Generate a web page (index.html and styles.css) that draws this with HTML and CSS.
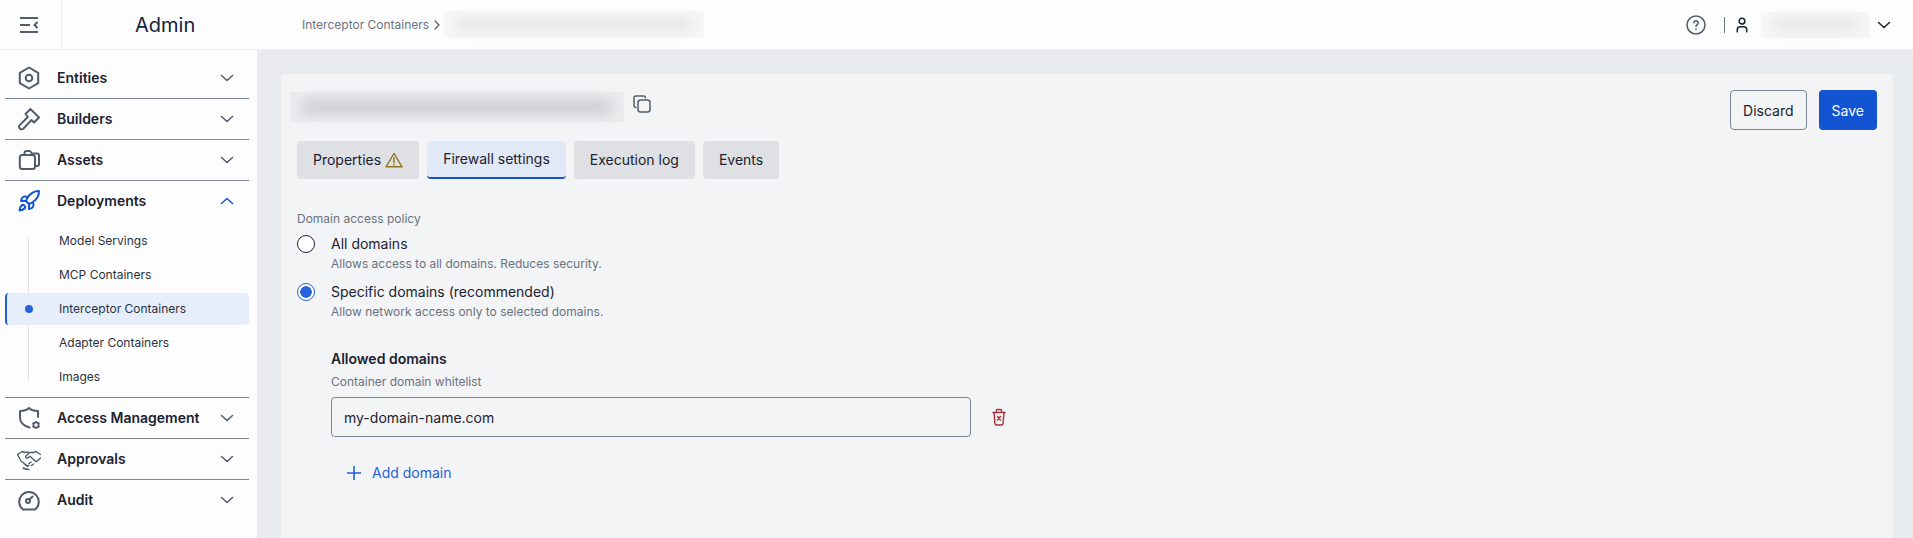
FILE: index.html
```html
<!DOCTYPE html>
<html lang="en">
<head>
    <meta charset="UTF-8">
    <meta name="viewport" content="width=device-width, initial-scale=1.0">
    <title>Interceptor Containers</title>
    <link rel="stylesheet" href="styles.css">
</head>
<body>

    <!-- Top bar -->
    <header class="topbar">
        <div class="menu-cell">
            <svg class="menu-icon" viewBox="0 0 18 16"><path d="M0 1h18M0 8h10M0 15h18M17.500 5 14.500 8l3 3"/></svg>
        </div>
        <div class="app-name">Admin</div>
        <div class="crumbs">
            <span>Interceptor Containers</span>
            <svg class="crumb-sep" viewBox="0 0 8 12"><path d="M2 2l4 4-4 4"/></svg>
            <div class="blur-box crumb-blur"><div class="blur-bar"></div></div>
        </div>
        <div class="top-right">
            <svg class="help-icon" viewBox="0 0 20 20">
                <circle cx="10" cy="10" r="9"/>
                <path d="M7.800 7.800a2.200 2.200 0 1 1 3.400 1.900c-.8.500-1.200.9-1.200 1.800"/>
                <path d="M10 14v.6"/>
            </svg>
            <div class="top-divider"></div>
            <svg class="user-icon" viewBox="0 0 14 18">
                <circle cx="7" cy="4.500" r="3.300"/>
                <path d="M1.500 17v-2.500a3.500 3.500 0 0 1 3.500-3.500h4a3.500 3.500 0 0 1 3.500 3.500V17"/>
            </svg>
            <div class="blur-box user-blur"><div class="blur-bar"></div></div>
            <svg class="chev chev-dark" viewBox="0 0 14 8"><path d="M1.500 1.500 7 6.500l5.500-5"/></svg>
        </div>
    </header>

    <div class="layout">

        <!-- Sidebar -->
        <nav class="sidebar">
            <div class="nav-row">
                <svg class="nav-icon" viewBox="0 0 24 24"><path d="M12 1.500 21.200 6.800v10.400L12 22.500l-9.200-5.300V6.800z"/><circle cx="12" cy="12" r="3.300"/></svg>
                <span class="nav-label">Entities</span>
                <svg class="chev" viewBox="0 0 14 8"><path d="M1.500 1.500 7 6.500l5.500-5"/></svg>
            </div>
            <div class="nav-row">
                <svg class="nav-icon" viewBox="0 0 24 24"><path d="M13.500 2 22 10.500 17 15.500 14.500 13 6.500 21.500a2.300 2.300 0 0 1-3.700-3.400L10.800 10 8.500 7z"/></svg>
                <span class="nav-label">Builders</span>
                <svg class="chev" viewBox="0 0 14 8"><path d="M1.500 1.500 7 6.500l5.500-5"/></svg>
            </div>
            <div class="nav-row">
                <svg class="nav-icon" viewBox="0 0 24 24"><path d="M7.500 6.500V5a2 2 0 0 1 2-2h3.500l2 2.500H20A2 2 0 0 1 22 7.500V16a2 2 0 0 1-2 2h-2"/><rect x="2.800" y="7" width="15.200" height="14" rx="2.500"/></svg>
                <span class="nav-label">Assets</span>
                <svg class="chev" viewBox="0 0 14 8"><path d="M1.500 1.500 7 6.500l5.500-5"/></svg>
            </div>
            <div class="nav-row nav-row-open">
                <svg class="nav-icon nav-icon-blue" viewBox="0 0 24 24">
                    <path d="M4.500 16.500c-1.500 1.260-2 5-2 5s3.740-.5 5-2c.71-.84.7-2.130-.09-2.910a2.180 2.180 0 0 0-2.910-.09z"/>
                    <path d="m12 15-3-3a22 22 0 0 1 2-3.950A12.880 12.880 0 0 1 22 2c0 2.720-.78 7.500-6 11a22.350 22.350 0 0 1-4 2z"/>
                    <path d="M9 12H4s.55-3.030 2-4c1.620-1.080 5 0 5 0"/>
                    <path d="M12 15v5s3.030-.55 4-2c1.080-1.620 0-5 0-5"/>
                </svg>
                <span class="nav-label">Deployments</span>
                <svg class="chev chev-blue" viewBox="0 0 14 8"><path d="M1.500 6.500 7 1.500l5.500 5"/></svg>
            </div>
            <div class="sub-list">
                <a class="sub-item">Model Servings</a>
                <a class="sub-item">MCP Containers</a>
                <a class="sub-item sub-item-active">Interceptor Containers</a>
                <a class="sub-item">Adapter Containers</a>
                <a class="sub-item">Images</a>
            </div>
            <div class="nav-row nav-row-top">
                <svg class="nav-icon" viewBox="0 0 24 24">
                    <path d="M12.500 21.500C7 20 3 16.500 3 11.500V5c4 0 7-1 9-3 2 2 5 3 9 3v6"/>
                    <path class="gear-spokes" d="M19 15v8M15.500 17l7 4M15.500 21l7-4"/>
                    <circle class="gear-hub" cx="19" cy="19" r="2.600"/>
                </svg>
                <span class="nav-label">Access Management</span>
                <svg class="chev" viewBox="0 0 14 8"><path d="M1.500 1.500 7 6.500l5.500-5"/></svg>
            </div>
            <div class="nav-row">
                <svg class="nav-icon nav-icon-thin" viewBox="0 0 24 24">
                    <path d="M.500 7.500 5 4.500l2.500 1L11 5M23.500 7.500 19 4.500l-2.500 1h-4l-3.500 3.500a1.300 1.300 0 0 0 2 1.700l2-1.500 6 5.500 1-.5L23.500 11"/>
                    <path d="M.500 7.500 4 14l6.500 5 1.500-.5M7 16.500l3.500 3M14 15l-2 1.500M16.500 17l-2 1.500"/>
                    <path d="M6 21c2 1 4 1.500 6 1.500"/>
                </svg>
                <span class="nav-label">Approvals</span>
                <svg class="chev" viewBox="0 0 14 8"><path d="M1.500 1.500 7 6.500l5.500-5"/></svg>
            </div>
            <div class="nav-row nav-row-last">
                <svg class="nav-icon" viewBox="0 0 24 24">
                    <path d="M6 21.500A9.800 9.800 0 1 1 18 21.500z"/>
                    <circle cx="11" cy="13" r="2"/>
                    <path d="M12.500 11.500 15.500 8.500"/>
                </svg>
                <span class="nav-label">Audit</span>
                <svg class="chev" viewBox="0 0 14 8"><path d="M1.500 1.500 7 6.500l5.500-5"/></svg>
            </div>
        </nav>

        <!-- Main -->
        <main class="main">
            <section class="panel">
                <div class="panel-head">
                    <div class="title-wrap">
                        <div class="blur-box title-blur"><div class="blur-bar"></div></div>
                        <svg class="copy-icon" viewBox="0 0 18 18">
                            <rect x="5" y="5" width="12" height="12" rx="2.500"/>
                            <path d="M2.800 12.500A2 2 0 0 1 1 10.500V3a2 2 0 0 1 2-2h7.500a2 2 0 0 1 2 1.800"/>
                        </svg>
                    </div>
                    <div class="actions">
                        <button class="btn btn-outline">Discard</button>
                        <button class="btn btn-primary">Save</button>
                    </div>
                </div>

                <div class="tabs">
                    <div class="tab">Properties
                        <svg class="warn-icon" viewBox="0 0 18 16">
                            <path d="M9 1.500 17 14.800H1z"/>
                            <path d="M9 6v4.500M9 12.300v.7"/>
                        </svg>
                    </div>
                    <div class="tab tab-active">Firewall settings</div>
                    <div class="tab">Execution log</div>
                    <div class="tab">Events</div>
                </div>

                <div class="field-label">Domain access policy</div>
                <div class="radio-row">
                    <span class="radio"></span>
                    <span>All domains</span>
                </div>
                <div class="radio-desc">Allows access to all domains. Reduces security.</div>
                <div class="radio-row radio-row-next">
                    <span class="radio radio-on"></span>
                    <span>Specific domains (recommended)</span>
                </div>
                <div class="radio-desc">Allow network access only to selected domains.</div>

                <div class="domains">
                    <h3 class="domains-title">Allowed domains</h3>
                    <div class="domains-sub">Container domain whitelist</div>
                    <div class="domain-row">
                        <input class="domain-input" type="text" value="my-domain-name.com">
                        <svg class="trash-icon" viewBox="0 0 14 18">
                            <path d="M1 4.500h12M4.500 4.500V2.500a1 1 0 0 1 1-1h3a1 1 0 0 1 1 1v2"/>
                            <path d="M2 4.500 3 15.500a1.500 1.500 0 0 0 1.500 1.500h5a1.500 1.500 0 0 0 1.500-1.500L12 4.500"/>
                            <path d="M5.500 8.500l3 3.500M8.500 8.500l-3 3.500"/>
                        </svg>
                    </div>
                    <div class="add-row">
                        <svg class="plus-icon" viewBox="0 0 14 14"><path d="M7 0v14M0 7h14"/></svg>
                        <span>Add domain</span>
                    </div>
                </div>
            </section>
        </main>
    </div>

</body>
</html>
```

FILE: styles.css
```css
* {
    box-sizing: border-box;
}
html, body {
    height: 100%;
}
body {
    margin: 0;
    display: flex;
    flex-direction: column;
    overflow: hidden;
    font-family: Inter, "Noto Sans", sans-serif;
    font-size: 14px;
    line-height: 20px;
    color: #1b2230;
    background-color: #e9ecef;
}
svg {
    display: block;
    flex: none;
    fill: none;
    stroke-linecap: round;
    stroke-linejoin: round;
}

/* top bar */
.topbar {
    height: 50px;
    flex: none;
    display: flex;
    align-items: center;
    background-color: #fdfdfe;
    border-bottom: 1px solid #eceef0;
}
.menu-cell {
    width: 62px;
    height: 100%;
    display: flex;
    align-items: center;
    padding-left: 20px;
    border-right: 1px solid #e9ebee;
}
.menu-icon {
    width: 18px;
    height: 16px;
    stroke: #535c6b;
    stroke-width: 2;
    stroke-linecap: butt;
}
.app-name {
    width: 240px;
    padding-left: 73px;
    font-size: 20px;
    line-height: 24px;
    color: #14213d;
}
.crumbs {
    display: flex;
    align-items: center;
    font-size: 12px;
    color: #6b7280;
}
.crumb-sep {
    width: 8px;
    height: 12px;
    margin: 0 3px 0 4px;
    stroke: #535c6b;
    stroke-width: 1.2;
}
.top-right {
    margin-left: auto;
    display: flex;
    align-items: center;
    padding-right: 22px;
}
.help-icon {
    width: 20px;
    height: 20px;
    stroke: #535c6b;
    stroke-width: 1.500;
}
.top-divider {
    width: 1px;
    height: 16px;
    margin: 0 11px 0 18px;
    background-color: #6b7280;
}
.user-icon {
    width: 12px;
    height: 16px;
    stroke: #1b2230;
    stroke-width: 1.800;
}
.chev {
    width: 14px;
    height: 8px;
    stroke: #535c6b;
    stroke-width: 1.500;
}
.chev-dark {
    stroke: #1b2230;
    margin-left: 7px;
}
.chev-blue {
    stroke: #1254d1;
}

/* blurred out values */
.blur-box {
    display: flex;
    padding: 8px 12px;
    background-color: #f7f7f8;
}
.blur-bar {
    flex: 1;
    background-color: #e0e1e3;
    filter: blur(7px);
}
.crumb-blur {
    width: 260px;
    height: 27px;
}
.user-blur {
    width: 109px;
    height: 26px;
    margin-left: 13px;
}
.title-blur {
    width: 334px;
    height: 30px;
    background-color: #ebecee;
}
.title-blur .blur-bar {
    background-color: #cacccf;
}

/* sidebar */
.layout {
    flex: 1;
    display: flex;
    min-height: 0;
}
.sidebar {
    width: 257px;
    flex: none;
    padding: 8px 8px 0 5px;
    background-color: #fdfdfe;
}
.nav-row {
    height: 41px;
    display: flex;
    align-items: center;
    padding: 0 15px 1px 12px;
    border-bottom: 1px solid #7c8595;
}
.nav-row-open,
.nav-row-last {
    border-bottom: none;
    height: 40px;
    padding-bottom: 0;
}
.nav-row-top {
    border-top: 1px solid #7c8595;
    height: 42px;
}
.nav-icon {
    width: 24px;
    height: 24px;
    stroke: #535c6b;
    stroke-width: 2;
}
.nav-icon-blue {
    stroke: #1254d1;
}
.nav-icon-thin {
    stroke-width: 1.400;
}
.gear-spokes {
    stroke-width: 1.500;
    stroke-linecap: butt;
}
.gear-hub {
    fill: #fdfdfe;
    stroke-width: 1.800;
}
.nav-label {
    flex: 1;
    margin-left: 16px;
    font-weight: 600;
    color: #1b2230;
}
.sub-list {
    position: relative;
    display: flex;
    flex-direction: column;
    gap: 2px;
    padding: 4px 0;
}
.sub-list::before {
    content: "";
    position: absolute;
    left: 23px;
    top: 16px;
    bottom: 16px;
    width: 1px;
    background-color: #dfe2e6;
}
.sub-item {
    position: relative;
    height: 32px;
    display: flex;
    align-items: center;
    padding-left: 54px;
    font-size: 12px;
    color: #2b3240;
}
.sub-item-active {
    background-color: #e6eefb;
    border-left: 2px solid #1f5fd6;
    border-radius: 4px;
    padding-left: 52px;
}
.sub-item-active::before {
    content: "";
    position: absolute;
    left: 18px;
    top: 12px;
    width: 8px;
    height: 8px;
    border-radius: 50%;
    background-color: #2563dc;
}

/* main panel */
.main {
    flex: 1;
    min-width: 0;
    padding: 24px 20px 0 24px;
}
.panel {
    height: 100%;
    padding: 16px;
    background-color: #f3f4f6;
    border-radius: 4px 4px 0 0;
}
.panel-head {
    display: flex;
    justify-content: space-between;
    height: 40px;
}
.title-wrap {
    display: flex;
    align-items: flex-start;
    gap: 9px;
    margin: 2px 0 0 -7px;
}
.copy-icon {
    width: 18px;
    height: 18px;
    margin-top: 3px;
    stroke: #535c6b;
    stroke-width: 1.500;
}
.actions {
    display: flex;
    gap: 12px;
}
.btn {
    height: 40px;
    padding: 0 13px;
    font-family: inherit;
    font-size: 14px;
    border-radius: 4px;
    cursor: pointer;
}
.btn-outline {
    padding: 0 12px;
    background: none;
    color: #1b2230;
    border: 1px solid #7c8595;
}
.btn-primary {
    background-color: #1254d1;
    color: #fff;
    border: none;
}

/* tabs */
.tabs {
    display: flex;
    gap: 8px;
    margin-top: 11px;
}
.tab {
    height: 38px;
    display: flex;
    align-items: center;
    gap: 4px;
    padding: 0 16px;
    background-color: #dee0e4;
    border-radius: 4px;
    color: #1b2230;
}
.tab-active {
    background-color: #e1e8f6;
    border-bottom: 2px solid #1254d1;
}
.warn-icon {
    width: 18px;
    height: 16px;
    stroke: #8f7420;
    stroke-width: 1.400;
}

/* radios */
.field-label {
    margin-top: 32px;
    font-size: 12px;
    line-height: 16px;
    color: #6b7280;
}
.radio-row {
    display: flex;
    align-items: center;
    gap: 16px;
    margin-top: 7px;
    color: #1b2230;
}
.radio-row-next {
    margin-top: 10px;
}
.radio {
    width: 18px;
    height: 18px;
    border: 1.500px solid #1b2230;
    border-radius: 50%;
    background-color: #fff;
}
.radio-on {
    border-color: #2563dc;
    background: radial-gradient(circle, #2563dc 0 5.500px, #fff 6px);
}
.radio-desc {
    margin: 2px 0 0 34px;
    font-size: 12px;
    line-height: 16px;
    color: #6b7280;
}

/* domains */
.domains {
    margin: 29px 0 0 34px;
}
.domains-title {
    margin: 0;
    font-size: 14px;
    line-height: 20px;
    font-weight: 600;
}
.domains-sub {
    margin-top: 5px;
    font-size: 12px;
    line-height: 16px;
    color: #6b7280;
}
.domain-row {
    display: flex;
    align-items: center;
    gap: 21px;
    margin-top: 7px;
}
.domain-input {
    width: 640px;
    height: 40px;
    padding: 0 12px;
    font-family: inherit;
    font-size: 14px;
    color: #1b2230;
    background: none;
    border: 1px solid #7c8595;
    border-radius: 4px;
}
.trash-icon {
    width: 14px;
    height: 18px;
    stroke: #a6303a;
    stroke-width: 1.400;
}
.add-row {
    display: flex;
    align-items: center;
    gap: 11px;
    margin: 26px 0 0 16px;
    color: #1f5fd6;
}
.plus-icon {
    width: 14px;
    height: 14px;
    stroke: #1f5fd6;
    stroke-width: 1.600;
    stroke-linecap: butt;
}
```
